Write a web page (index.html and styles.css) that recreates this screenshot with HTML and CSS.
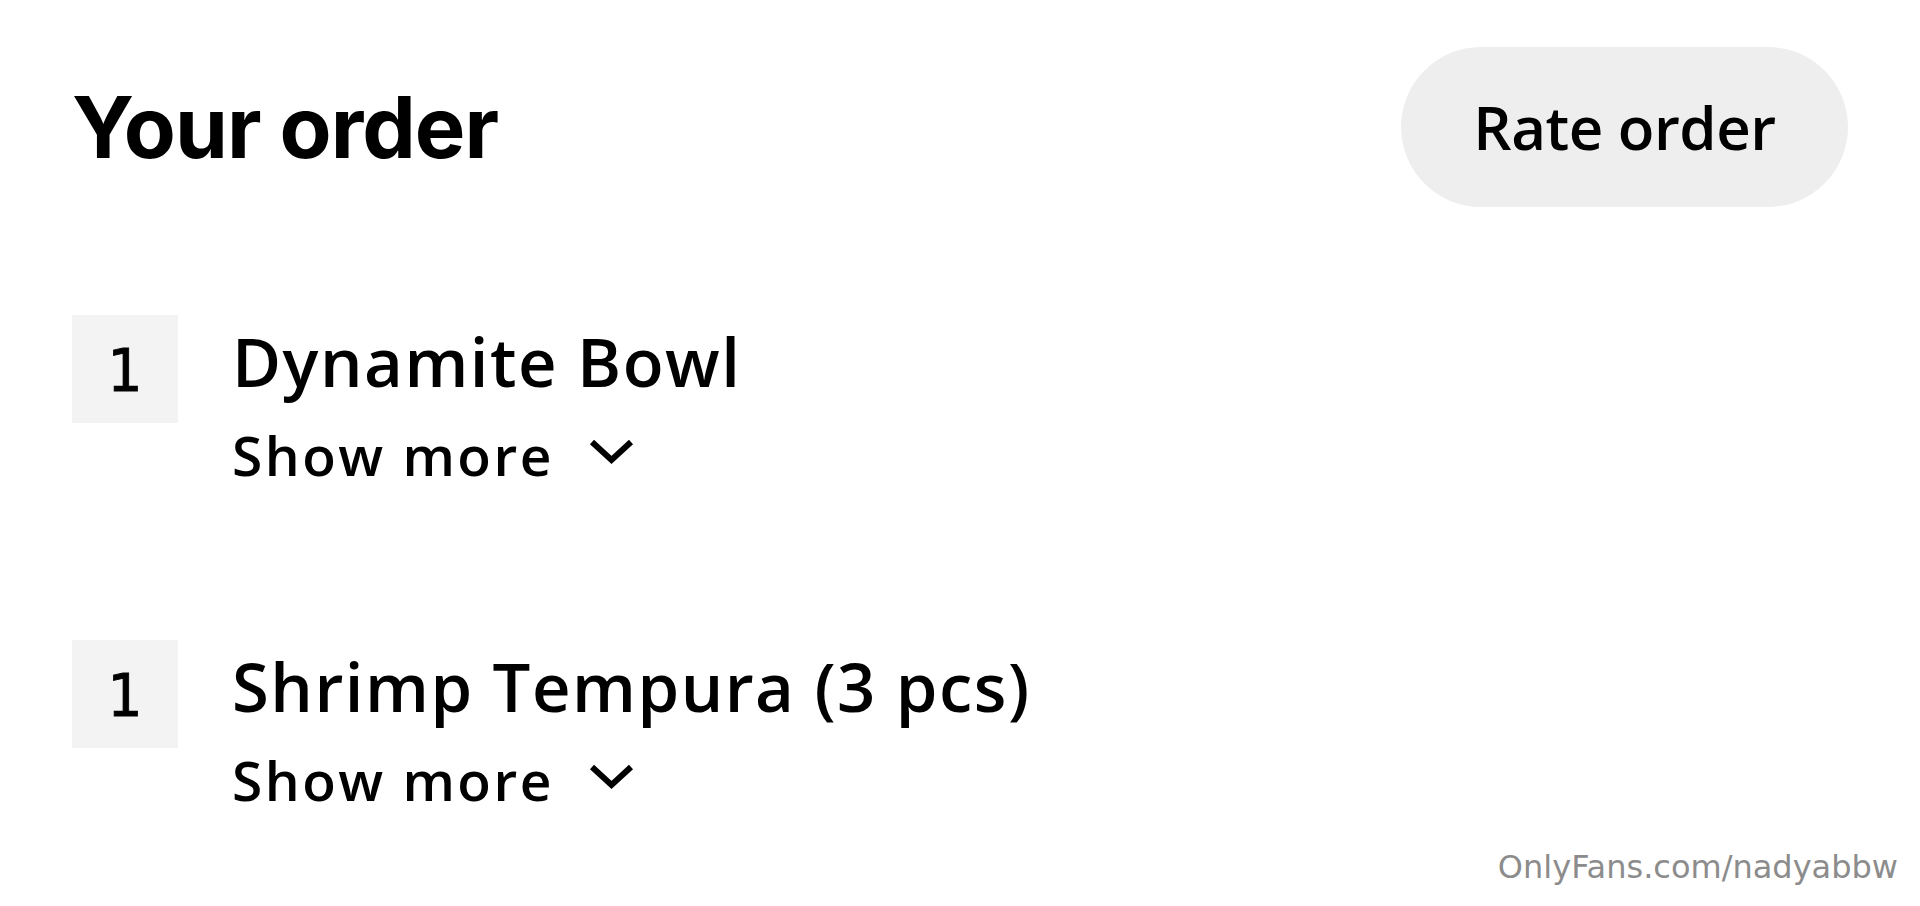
FILE: index.html
```html
<!DOCTYPE html>
<html lang="en">
<head>
<meta charset="utf-8">
<title>Your order</title>
<link rel="stylesheet" href="styles.css">
</head>
<body>
<main class="page">
  <header class="header">
    <h1 class="title">Your order</h1>
    <button class="rate-btn" type="button">Rate order</button>
  </header>
  <ul class="items">
    <li class="item">
      <div class="qty">1</div>
      <div class="info">
        <div class="name">Dynamite Bowl</div>
        <div class="more">Show more
          <svg class="chev" width="45" height="27" viewBox="0 0 45 27"><polyline points="3,4 22.5,22 42,4" fill="none" stroke="#000" stroke-width="6"/></svg>
        </div>
      </div>
    </li>
    <li class="item">
      <div class="qty">1</div>
      <div class="info">
        <div class="name">Shrimp Tempura (3 pcs)</div>
        <div class="more">Show more
          <svg class="chev" width="45" height="27" viewBox="0 0 45 27"><polyline points="3,4 22.5,22 42,4" fill="none" stroke="#000" stroke-width="6"/></svg>
        </div>
      </div>
    </li>
  </ul>
  <div class="watermark">OnlyFans.com/nadyabbw</div>
</main>
</body>
</html>
```
FILE: styles.css
```css
html, body {
  margin: 0;
  padding: 0;
  background: #ffffff;
}
body {
  width: 1920px;
  height: 906px;
  overflow: hidden;
  color: #000;
  font-family: "Open Sans", "Noto Sans", sans-serif;
}
.page {
  position: relative;
  width: 1920px;
  height: 906px;
  box-sizing: border-box;
  padding: 47px 72px 0 72px;
}
.header {
  display: flex;
  justify-content: space-between;
  align-items: center;
  height: 160px;
}
.title {
  margin: 0;
  font-family: Inter, "Liberation Sans", sans-serif;
  font-weight: 700;
  font-size: 85px;
  line-height: 1;
  letter-spacing: -1px;
}
.rate-btn {
  width: 447px;
  height: 160px;
  border: none;
  border-radius: 80px;
  background: #eeeeee;
  color: #000;
  font-family: "Open Sans", "Noto Sans", sans-serif;
  font-weight: 600;
  font-size: 60px;
  letter-spacing: -0.5px;
  display: flex;
  align-items: center;
  justify-content: center;
  padding: 0;
}
.items {
  list-style: none;
  margin: 108px 0 0 0;
  padding: 0;
  display: flex;
  flex-direction: column;
  gap: 138px;
}
.item {
  display: flex;
  align-items: flex-start;
}
.qty {
  width: 106px;
  height: 108px;
  background: #f3f3f3;
  display: flex;
  align-items: center;
  justify-content: center;
  font-family: "DejaVu Sans Mono", "Liberation Mono", monospace;
  font-size: 58px;
  line-height: 1;
  padding-top: 4px;
  padding-right: 2px;
  box-sizing: border-box;
  -webkit-text-stroke: 0.8px #000;
}
.info {
  margin-left: 54px;
  display: flex;
  flex-direction: column;
}
.name {
  font-size: 67px;
  font-weight: 600;
  letter-spacing: 1.5px;
  line-height: 92px;
}
.more {
  display: flex;
  align-items: center;
  font-size: 55px;
  font-weight: 600;
  letter-spacing: 2.5px;
  line-height: 95px;
}
.chev {
  margin-left: 35px;
  margin-bottom: 6px;
}
.watermark {
  position: absolute;
  right: 22px;
  bottom: 20px;
  font-family: "DejaVu Sans", sans-serif;
  font-size: 32px;
  color: #8c8c8c;
}
```
